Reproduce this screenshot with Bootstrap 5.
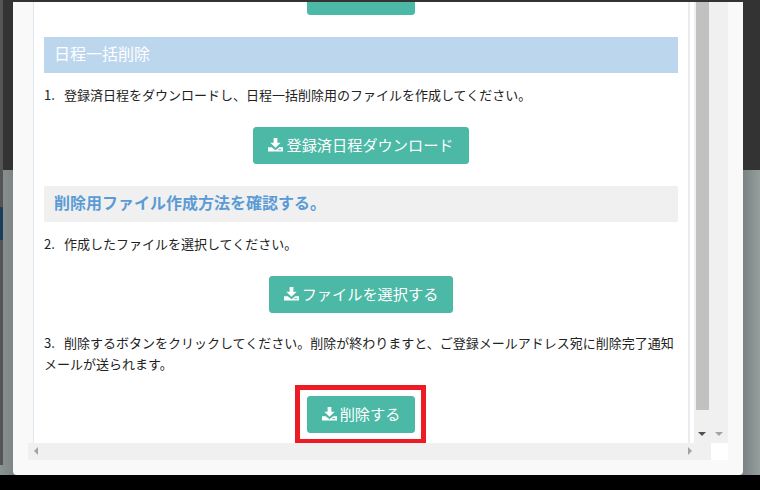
<!DOCTYPE html>
<html lang="ja">
<head>
<meta charset="utf-8">
<link href="https://cdn.jsdelivr.net/npm/bootstrap@5.3.0/dist/css/bootstrap.min.css" rel="stylesheet">
<style>
html,body{height:490px;overflow:hidden}
body{background:#000;font-family:"Noto Sans CJK JP","Liberation Sans",sans-serif;color:#222;font-size:13px;line-height:21px}
.stage{position:relative;width:760px;height:490px;background:#000;overflow:hidden}
.topband{height:170px;background:#333}
.midband{height:305px;background:linear-gradient(90deg,#8a9292 0,#7d8585 13px,#7a8383 743px,#959d9d 760px)}
.leftedge{position:absolute;left:0;top:0;width:3px;height:465px;background:#555}
.leftblue{position:absolute;left:0;top:207px;width:3px;height:33px;background:#1a4058}
.topedge{position:absolute;left:0;top:0;width:760px;height:2px;background:#333}
.dlg{position:absolute;left:13px;top:2px;width:730px;height:473px;background:#f9f9f9;border-radius:0 0 4px 4px;padding:0 15px 15px}
.pane{height:441px;padding-left:5px}
.sheet{width:657px;background:#fff;border-left:1px solid #dee6ef;border-right:2px solid #e9edf2;overflow:hidden;padding:0 10px}
.gutter{width:4px;background:#fff}
.vtrack{width:34px;background:#f0f0f0;position:relative;padding-left:2px}
.vthumb{width:13px;height:408px;background:#c1c1c1}
.arr-d{position:absolute;top:430px;width:0;height:0;border-left:4px solid transparent;border-right:4px solid transparent;border-top:4px solid #505050}
.arr-a{left:4px}
.arr-b{left:21px;border-top-color:#a3a3a3}
.hbar{height:17px;background:#f0f0f0;position:relative}
.hcorner{width:17px;height:17px;background:#fff;margin-left:auto}
.arr-l,.arr-r{position:absolute;top:4px;width:0;height:0;border-top:4px solid transparent;border-bottom:4px solid transparent}
.arr-l{left:6px;border-right:4px solid #a3a3a3}
.arr-r{left:660px;border-left:4px solid #a3a3a3}
.band{height:36px;padding:0 10px;font-size:16px;line-height:33px}
.band-blue{background:#bcd6ee;color:#fff;margin-top:22px}
.band-gray{background:#f0f0f0;color:#5b9bd5;font-weight:700;line-height:32px;margin-top:22px}
.step{margin:0;padding-top:11px;height:54px}
.stepnum{display:inline-block;width:20px}
.act{height:37px;display:flex;justify-content:center}
.tealbtn{--bs-btn-bg:#4bb9a5;--bs-btn-color:#fff;--bs-btn-border-color:#4bb9a5;--bs-btn-hover-bg:#4bb9a5;--bs-btn-hover-color:#fff;--bs-btn-hover-border-color:#4bb9a5;--bs-btn-border-radius:3px;height:37px;font-size:15.2px;line-height:21px;padding:6px 15px 8px;display:inline-flex;align-items:center;gap:3px;white-space:nowrap}
.tealbtn svg{width:15px;height:15px;flex:none}
.firstact{margin-top:-24px}
.firstact .tealbtn{padding-bottom:13px}
.wide{width:216px}.mid{width:184px}.narrow{width:108px}
.step3{margin:0;padding-top:19px;height:74px}
.redwrap{width:131px;height:59px;border:5px solid #ed1c24;margin:-2px 0 0 251px;padding:6px 7px 0}
</style>
</head>
<body>
<div class="stage">
  <div class="topband"></div>
  <div class="midband"></div>
  <div class="topedge"></div>
  <div class="leftedge"></div>
  <div class="leftblue"></div>
  <div class="dlg">
    <div class="pane d-flex">
      <div class="sheet">
        <div class="act firstact"><button type="button" class="btn tealbtn narrow justify-content-center">登録する</button></div>
        <div class="band band-blue">日程一括削除</div>
        <p class="step"><span class="stepnum">1.</span>登録済日程をダウンロードし、日程一括削除用のファイルを作成してください。</p>
        <div class="act"><button type="button" class="btn tealbtn wide justify-content-center"><svg viewBox="0 0 16 16"><path fill="#fff" d="M6 1h4v5h3.500L8 11.500 2.500 6H6zM0 11h4L8 14l4-3h4v4.500H0z"/><rect x="11" y="13" width="3" height="1" fill="#4bb9a5"/></svg>登録済日程ダウンロード</button></div>
        <div class="band band-gray">削除用ファイル作成方法を確認する。</div>
        <p class="step"><span class="stepnum">2.</span>作成したファイルを選択してください。</p>
        <div class="act"><button type="button" class="btn tealbtn mid justify-content-center"><svg viewBox="0 0 16 16"><path fill="#fff" d="M6 1h4v5h3.500L8 11.500 2.500 6H6zM0 11h4L8 14l4-3h4v4.500H0z"/><rect x="11" y="13" width="3" height="1" fill="#4bb9a5"/></svg>ファイルを選択する</button></div>
        <p class="step3"><span class="stepnum">3.</span>削除するボタンをクリックしてください。削除が終わりますと、ご登録メールアドレス宛に削除完了通知メールが送られます。</p>
        <div class="redwrap"><button type="button" class="btn tealbtn narrow justify-content-center"><svg viewBox="0 0 16 16"><path fill="#fff" d="M6 1h4v5h3.500L8 11.500 2.500 6H6zM0 11h4L8 14l4-3h4v4.500H0z"/><rect x="11" y="13" width="3" height="1" fill="#4bb9a5"/></svg>削除する</button></div>
      </div>
      <div class="gutter"></div>
      <div class="vtrack"><div class="vthumb"></div><span class="arr-d arr-a"></span><span class="arr-d arr-b"></span></div>
    </div>
    <div class="hbar"><span class="arr-l"></span><span class="arr-r"></span><div class="hcorner"></div></div>
  </div>
</div>
<script src="https://cdn.jsdelivr.net/npm/bootstrap@5.3.0/dist/js/bootstrap.bundle.min.js"></script>
</body>
</html>
